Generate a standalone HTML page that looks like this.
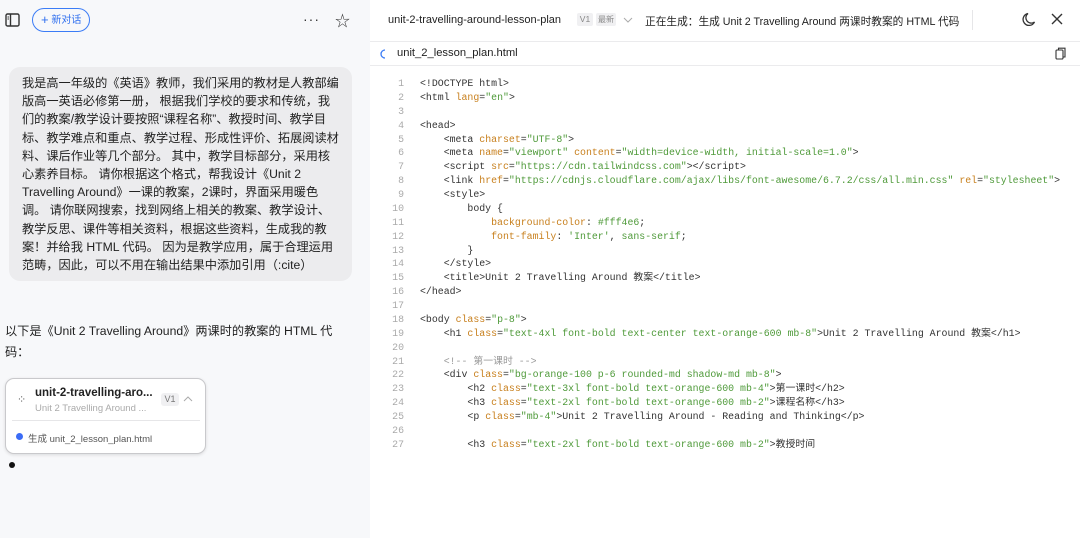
<!DOCTYPE html>
<html><head><meta charset="utf-8">
<style>
*{margin:0;padding:0;box-sizing:border-box}
body{width:1080px;height:538px;overflow:hidden;font-family:"Liberation Sans","Noto Sans CJK SC",sans-serif;background:#fff;position:relative;color:#222}
.left{position:absolute;left:0;top:0;width:370px;height:538px;background:#f7f8fa}
.right{position:absolute;left:370px;top:0;width:710px;height:538px;background:#fff}
.abs{position:absolute}
.bubble{position:absolute;left:9px;top:67px;width:343px;height:214px;background:#ececee;border-radius:11px;padding:7px 0 0 13px;font-size:12.2px;line-height:18.2px;color:#222;white-space:nowrap}
.code{position:absolute;left:0;top:77px;font-family:"Liberation Mono","Noto Sans CJK SC",monospace;font-size:9.9px;line-height:13.88px;color:#333;white-space:pre}
.ln{position:absolute;left:0;width:34px;text-align:right;color:#aaa}
.cl{position:absolute;left:50px}
.a{color:#c8801e}.s{color:#4f9a3a}.c{color:#999}
</style></head><body>
<div class="left">
 <svg class="abs" style="left:5px;top:13px" width="15" height="14" viewBox="0 0 15 14"><rect x="1" y="1" width="13" height="12" rx="1.5" fill="none" stroke="#333" stroke-width="1.4"/><line x1="5.5" y1="1" x2="5.5" y2="13" stroke="#333" stroke-width="1.4"/><line x1="2.5" y1="4" x2="4" y2="4" stroke="#333"/><line x1="2.5" y1="6" x2="4" y2="6" stroke="#333"/></svg>
 <div class="abs" style="left:32px;top:8px;width:58px;height:24px;border:1px solid #3b7cf6;border-radius:12px;color:#2f6fef;font-size:10px;line-height:22px;padding-left:8px"><span style="font-size:13px;vertical-align:-1px">+</span> 新对话</div>
 <div class="abs" style="left:303px;top:11px;font-size:14px;letter-spacing:1px;color:#333">···</div>
 <div class="abs" style="left:335px;top:10px;font-size:15px;color:#333">☆</div>
 <div class="bubble">我是高一年级的《英语》教师，我们采用的教材是人教部编<br>版高一英语必修第一册， 根据我们学校的要求和传统，我<br>们的教案/教学设计要按照“课程名称”、教授时间、教学目<br>标、教学难点和重点、教学过程、形成性评价、拓展阅读材<br>料、课后作业等几个部分。 其中，教学目标部分，采用核<br>心素养目标。 请你根据这个格式，帮我设计《Unit 2<br>Travelling Around》一课的教案，2课时，界面采用暖色<br>调。 请你联网搜索，找到网络上相关的教案、教学设计、<br>教学反思、课件等相关资料，根据这些资料，生成我的教<br>案！并给我 HTML 代码。 因为是教学应用，属于合理运用<br>范畴，因此，可以不用在输出结果中添加引用（:cite）</div>
 <div class="abs" style="left:5px;top:321px;width:350px;font-size:12.2px;line-height:21px;color:#222">以下是《Unit 2 Travelling Around》两课时的教案的 HTML 代码：</div>
 <div class="abs" style="left:5px;top:378px;width:201px;height:76px;background:#fff;border:1px solid #c9c9cc;border-radius:9px;box-shadow:0 1px 3px rgba(0,0,0,.12)">
  <div class="abs" style="left:11px;top:14px;font-size:11px;color:#666">⁘</div>
  <div class="abs" style="left:29px;top:8px;font-size:11.5px;font-weight:bold;color:#222">unit-2-travelling-aro...</div>
  <div class="abs" style="left:29px;top:24px;font-size:9.5px;color:#aaa">Unit 2 Travelling Around ...</div>
  <div class="abs" style="left:155px;top:14px;width:18px;height:13px;background:#f0f0f2;border-radius:3px;font-size:9px;color:#777;text-align:center;line-height:13px">V1</div>
  <svg class="abs" style="left:177px;top:16px" width="10" height="7"><path d="M1 6L5 2L9 6" fill="none" stroke="#aaa" stroke-width="1"/></svg>
  <div class="abs" style="left:6px;top:41px;width:188px;height:1px;background:#e6e6e8"></div>
  <div class="abs" style="left:10px;top:54px;width:7px;height:7px;border-radius:50%;background:#3b6cf6"></div>
  <div class="abs" style="left:22px;top:52px;font-size:9.5px;color:#555">生成 unit_2_lesson_plan.html</div>
 </div>
 <div class="abs" style="left:9px;top:462px;width:6px;height:6px;border-radius:50%;background:#111"></div>
</div>
<div class="right">
 <div class="abs" style="left:18px;top:14px;font-size:11px;color:#222;white-space:nowrap">unit-2-travelling-around-lesson-plan</div>
 <div class="abs" style="left:207px;top:13px;width:16px;height:13px;background:#f0f0f2;border-radius:2px;font-size:8.5px;color:#888;text-align:center;line-height:13px">V1</div>
 <div class="abs" style="left:226px;top:13px;width:20px;height:13px;background:#f0f0f2;border-radius:2px;font-size:8px;color:#888;text-align:center;line-height:13px">最新</div>
 <svg class="abs" style="left:253px;top:17px" width="10" height="6"><path d="M1 1L5 5L9 1" fill="none" stroke="#aaa"/></svg>
 <div class="abs" style="left:275px;top:14px;font-size:10.7px;color:#222;white-space:nowrap">正在生成：生成 Unit 2 Travelling Around 两课时教案的 HTML 代码</div>
 <div class="abs" style="left:602px;top:10px;width:1px;height:20px;background:#e6e6e8"></div>
 <svg class="abs" style="left:652px;top:12px" width="14" height="15" viewBox="0 0 14 15"><path d="M6 1.5A6 6 0 1 0 12.5 10A5 5 0 0 1 6 1.5Z" fill="none" stroke="#333" stroke-width="1.3"/></svg>
 <svg class="abs" style="left:681px;top:13px" width="12" height="12"><path d="M1 1L11 11M11 1L1 11" stroke="#333" stroke-width="1.4"/></svg>
 <div class="abs" style="left:0;top:41px;width:710px;height:1px;background:#ebebed"></div>
 <svg class="abs" style="left:10px;top:48px" width="10" height="12"><path d="M5 2A4 4 0 0 0 5 10" fill="none" stroke="#3b7cf6" stroke-width="1.3"/></svg>
 <div class="abs" style="left:27px;top:47px;font-size:11.2px;color:#222">unit_2_lesson_plan.html</div>
 <svg class="abs" style="left:685px;top:47px" width="11" height="13"><rect x="1" y="3" width="7" height="9" rx="1" fill="none" stroke="#333" stroke-width="1.1"/><path d="M3.5 3V1.2H10V10H8" fill="none" stroke="#333" stroke-width="1.1"/></svg>
 <div class="abs" style="left:0;top:65px;width:710px;height:1px;background:#ebebed"></div>
 <div class="code">
<div class="ln" style="top:0">1</div><div class="cl" style="top:0">&lt;!DOCTYPE html&gt;</div>
<div class="ln" style="top:13.88px">2</div><div class="cl" style="top:13.88px">&lt;html <span class="a">lang</span>=<span class="s">"en"</span>&gt;</div>
<div class="ln" style="top:27.76px">3</div>
<div class="ln" style="top:41.64px">4</div><div class="cl" style="top:41.64px">&lt;head&gt;</div>
<div class="ln" style="top:55.52px">5</div><div class="cl" style="top:55.52px">    &lt;meta <span class="a">charset</span>=<span class="s">"UTF-8"</span>&gt;</div>
<div class="ln" style="top:69.4px">6</div><div class="cl" style="top:69.4px">    &lt;meta <span class="a">name</span>=<span class="s">"viewport"</span> <span class="a">content</span>=<span class="s">"width=device-width, initial-scale=1.0"</span>&gt;</div>
<div class="ln" style="top:83.28px">7</div><div class="cl" style="top:83.28px">    &lt;script <span class="a">src</span>=<span class="s">"https://cdn.tailwindcss.com"</span>&gt;&lt;/script&gt;</div>
<div class="ln" style="top:97.16px">8</div><div class="cl" style="top:97.16px">    &lt;link <span class="a">href</span>=<span class="s">"https://cdnjs.cloudflare.com/ajax/libs/font-awesome/6.7.2/css/all.min.css"</span> <span class="a">rel</span>=<span class="s">"stylesheet"</span>&gt;</div>
<div class="ln" style="top:111.04px">9</div><div class="cl" style="top:111.04px">    &lt;style&gt;</div>
<div class="ln" style="top:124.92px">10</div><div class="cl" style="top:124.92px">        body {</div>
<div class="ln" style="top:138.8px">11</div><div class="cl" style="top:138.8px">            <span class="a">background-color</span>: <span class="s">#fff4e6</span>;</div>
<div class="ln" style="top:152.68px">12</div><div class="cl" style="top:152.68px">            <span class="a">font-family</span>: <span class="s">'Inter'</span>, <span class="s">sans-serif</span>;</div>
<div class="ln" style="top:166.56px">13</div><div class="cl" style="top:166.56px">        }</div>
<div class="ln" style="top:180.44px">14</div><div class="cl" style="top:180.44px">    &lt;/style&gt;</div>
<div class="ln" style="top:194.32px">15</div><div class="cl" style="top:194.32px">    &lt;title&gt;Unit 2 Travelling Around 教案&lt;/title&gt;</div>
<div class="ln" style="top:208.2px">16</div><div class="cl" style="top:208.2px">&lt;/head&gt;</div>
<div class="ln" style="top:222.08px">17</div>
<div class="ln" style="top:235.96px">18</div><div class="cl" style="top:235.96px">&lt;body <span class="a">class</span>=<span class="s">"p-8"</span>&gt;</div>
<div class="ln" style="top:249.84px">19</div><div class="cl" style="top:249.84px">    &lt;h1 <span class="a">class</span>=<span class="s">"text-4xl font-bold text-center text-orange-600 mb-8"</span>&gt;Unit 2 Travelling Around 教案&lt;/h1&gt;</div>
<div class="ln" style="top:263.72px">20</div>
<div class="ln" style="top:277.6px">21</div><div class="cl c" style="top:277.6px">    &lt;!-- 第一课时 --&gt;</div>
<div class="ln" style="top:291.48px">22</div><div class="cl" style="top:291.48px">    &lt;div <span class="a">class</span>=<span class="s">"bg-orange-100 p-6 rounded-md shadow-md mb-8"</span>&gt;</div>
<div class="ln" style="top:305.36px">23</div><div class="cl" style="top:305.36px">        &lt;h2 <span class="a">class</span>=<span class="s">"text-3xl font-bold text-orange-600 mb-4"</span>&gt;第一课时&lt;/h2&gt;</div>
<div class="ln" style="top:319.24px">24</div><div class="cl" style="top:319.24px">        &lt;h3 <span class="a">class</span>=<span class="s">"text-2xl font-bold text-orange-600 mb-2"</span>&gt;课程名称&lt;/h3&gt;</div>
<div class="ln" style="top:333.12px">25</div><div class="cl" style="top:333.12px">        &lt;p <span class="a">class</span>=<span class="s">"mb-4"</span>&gt;Unit 2 Travelling Around - Reading and Thinking&lt;/p&gt;</div>
<div class="ln" style="top:347px">26</div>
<div class="ln" style="top:360.88px">27</div><div class="cl" style="top:360.88px">        &lt;h3 <span class="a">class</span>=<span class="s">"text-2xl font-bold text-orange-600 mb-2"</span>&gt;教授时间</div>
 </div>
</div>
</body></html>
